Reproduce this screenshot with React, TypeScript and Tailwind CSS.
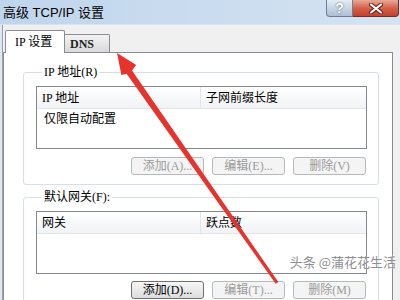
import React from 'react';

const dlgFont = "font-['Liberation_Serif','Noto_Sans_CJK_SC',serif]";

function Btn({ label, enabled }: { label: string; enabled?: boolean }) {
  return (
    <div
      className={
        'w-[73px] h-[18px] rounded-[3px] border flex items-center justify-center text-[12px] leading-[14px] ' +
        (enabled
          ? 'border-[#707070] bg-gradient-to-b from-[#f6f6f6] to-[#dddddd] text-black'
          : 'border-[#b5b9bc] bg-[#f4f4f4] text-[#9a9a9a]')
      }
    >
      {label}
    </div>
  );
}

function ListView({ col1, col2, rows }: { col1: string; col2: string; rows: string[] }) {
  return (
    <div className="h-[63px] border border-[#828790] bg-white flex flex-col">
      <div className="h-[22px] flex border-b border-[#e3e5e8] bg-gradient-to-b from-white to-[#f1f3f5] text-[12px] leading-[14px] text-black">
        <div className="w-[164px] border-r border-[#e3e5e8] pl-[5px] flex items-center">{col1}</div>
        <div className="flex-1 pl-[5px] flex items-center">{col2}</div>
      </div>
      {rows.map(r => (
        <div key={r} className="h-[19px] pl-[7px] flex items-center text-[12px] leading-[14px] text-black">
          {r}
        </div>
      ))}
    </div>
  );
}

function Group({
  title,
  className,
  children,
}: {
  title: string;
  className?: string;
  children: React.ReactNode;
}) {
  return (
    <fieldset className={'border border-[#d5dfe5] rounded-[3px] pl-[12px] pr-[11px] pt-[7px] pb-[9px] ' + (className ?? '')}>
      <legend className="ml-[6px] px-[2px] text-[12px] leading-[14px] text-black">{title}</legend>
      {children}
    </fieldset>
  );
}

export default function App() {
  return (
    <div className={'w-[400px] h-[300px] relative overflow-hidden bg-[#f0f0f0] flex flex-col ' + dlgFont}>
      {/* title bar */}
      <div className="h-[25px] flex justify-between bg-gradient-to-r from-[#bfd5ec] via-[#cadcef] to-[#d4e3f2] border-b border-[#d9e3ed]">
        <span className="pl-[3px] pt-[4px] text-[13px] leading-[18px] text-black font-['Liberation_Sans','Noto_Sans_CJK_SC',sans-serif]">
          高级 TCP/IP 设置
        </span>
        <div className="flex h-[17px] pr-[1px]">
          <div className="w-[27px] h-full border border-t-0 border-[#6e7f95] rounded-bl-[4px] bg-gradient-to-b from-[#e4ecf5] to-[#aebfd3] flex items-center justify-center">
            <span className="text-[14px] leading-[14px] font-bold text-white font-['Liberation_Sans',sans-serif] [text-shadow:0_0_2px_#4a5668]">
              ?
            </span>
          </div>
          <div className="w-[46px] h-full border border-t-0 border-l-0 border-[#7a2a1f] rounded-br-[4px] bg-gradient-to-b from-[#e9a896] via-[#d3614a] to-[#c2412c] flex items-center justify-center">
            <svg width="14" height="11" viewBox="0 0 14 11">
              <path d="M2 1.5 L12 9.5 M12 1.5 L2 9.5" stroke="#5a1a12" strokeWidth="4" strokeLinecap="round" />
              <path d="M2 1.5 L12 9.5 M12 1.5 L2 9.5" stroke="#ffffff" strokeWidth="2.2" strokeLinecap="round" />
            </svg>
          </div>
        </div>
      </div>

      {/* body */}
      <div className="flex-1 flex min-h-0">
        <div className="w-[2px] bg-[#dde7f2]" />
        <div className="flex-1 border-l border-[#9aa0a6] flex flex-col pt-[5px] min-w-0">
          {/* tabs */}
          <div className="h-[22px] flex items-end pl-[2px] relative z-10">
            <div className="w-[60px] h-[23px] -mb-px bg-white border border-b-0 border-[#898c95] rounded-t-[2px] pl-[9px] flex items-center text-[12px] leading-[14px] text-black">
              IP 设置
            </div>
            <div className="w-[45px] h-[18px] border border-l-0 border-b-0 border-[#898c95] rounded-tr-[2px] bg-gradient-to-b from-[#f3f3f3] to-[#d9d9d9] pl-[5px] flex items-center text-[12px] leading-[14px] font-bold text-[#222]">
              DNS
            </div>
          </div>

          {/* tab page */}
          <div className="flex-1 mr-[7px] border border-[#898c95] bg-white pl-[19px] pr-[13px] pt-[12px]">
            <Group title="IP 地址(R)">
              <ListView col1="IP 地址" col2="子网前缀长度" rows={['仅限自动配置']} />
              <div className="mt-[8px] flex justify-end gap-[8px] pr-[1px]">
                <Btn label="添加(A)..." />
                <Btn label="编辑(E)..." />
                <Btn label="删除(V)" />
              </div>
            </Group>
            <Group title="默认网关(F):" className="mt-[5px]">
              <ListView col1="网关" col2="跃点数" rows={[]} />
              <div className="mt-[7px] flex justify-end gap-[8px] pr-[1px]">
                <Btn label="添加(D)..." enabled />
                <Btn label="编辑(T)..." />
                <Btn label="删除(M)" />
              </div>
            </Group>
          </div>
        </div>
      </div>

      {/* watermark */}
      <div className="absolute right-[4px] top-[254px] text-[13px] leading-[16px] text-[#8f8f8f] font-['Noto_Sans_CJK_SC',sans-serif] [text-shadow:0_0_2px_#ffffff]">
        头条 @蒲花花生活
      </div>

      {/* red arrow */}
      <svg className="absolute inset-0 pointer-events-none" width="400" height="300" viewBox="0 0 400 300">
        <polygon
          points="117,53 136.2,64.9 132.0,70.4 278.3,282.0 275.7,283.8 126.6,73.7 121.4,75.0"
          fill="#e6332e"
        />
      </svg>
    </div>
  );
}
